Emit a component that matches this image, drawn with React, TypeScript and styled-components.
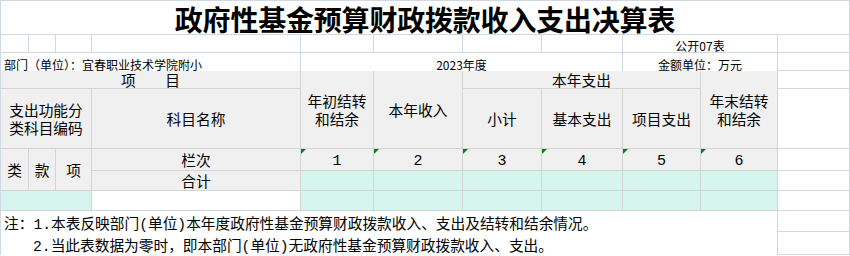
import React from 'react'
import styled, { createGlobalStyle, css } from 'styled-components'

const GRID_LINE = '#d0d7e5'
const TABLE_LINE = '#d4d4d4'
const GRAY = '#f0f0f0'
const MINT = '#d6f5ee'

const CJK = `"Noto Sans CJK SC", "Noto Sans", sans-serif`
const MONO = `"Liberation Mono", "Noto Sans CJK SC", monospace`

const GlobalStyle = createGlobalStyle`
  * { box-sizing: border-box; }
  body {
    margin: 0;
    background: #fff;
    font-family: ${CJK};
  }
`

type Fill = 'white' | 'gray' | 'mint'
type Edge = 'grid' | 'table' | 'open'

type CellProps = {
  $c: number
  $r: number
  $cs?: number
  $rs?: number
  $fill?: Fill
  $edge?: Edge
}

const fills: Record<Fill, string> = { white: '#fff', gray: GRAY, mint: MINT }

const edges: Record<Edge, ReturnType<typeof css>> = {
  grid: css`
    border-right: 1px solid ${GRID_LINE};
    border-bottom: 1px solid ${GRID_LINE};
  `,
  table: css`
    border-right: 1px solid ${TABLE_LINE};
    border-bottom: 1px solid ${TABLE_LINE};
  `,
  open: css`
    border-right: 1px solid ${GRID_LINE};
  `,
}

const Sheet = styled.div`
  display: grid;
  grid-template-columns: 28px 27px 36px 209px 73px 89px 79px 81px 78px 77px 72px;
  grid-template-rows: 34px 18px 18px 18px 60px 22px 20px 20px 21px 23px;
  width: 850px;
  border-top: 1px solid ${GRID_LINE};
  border-left: 1px solid ${GRID_LINE};
  color: #000;
`

const Cell = styled.div<CellProps>`
  grid-column: ${(p) => p.$c + 1} / span ${(p) => p.$cs ?? 1};
  grid-row: ${(p) => p.$r + 1} / span ${(p) => p.$rs ?? 1};
  background: ${(p) => fills[p.$fill ?? 'white']};
  ${(p) => edges[p.$edge ?? 'grid']}
  display: flex;
  align-items: center;
  justify-content: center;
  min-width: 0;
  white-space: nowrap;
`

const Title = styled(Cell)`
  padding-top: 2px;
  font-size: 28px;
  font-weight: 700;
  line-height: 30px;
  letter-spacing: -0.2px;
`

const Info = styled(Cell)<{ $left?: boolean }>`
  align-items: flex-end;
  justify-content: ${(p) => (p.$left ? 'flex-start' : 'center')};
  padding-left: ${(p) => (p.$left ? '3px' : '0')};
  font-size: 12px;
  line-height: 13px;
`

const Head = styled(Cell).attrs({ $fill: 'gray', $edge: 'table' })`
  padding: 0 6px;
  font-size: 14.7px;
  line-height: 18px;
  text-align: center;
  white-space: normal;
`

const Index = styled(Cell).attrs({ $fill: 'gray', $edge: 'table' })`
  position: relative;
  padding-top: 3px;
  font-family: ${MONO};
  font-size: 15px;

  &::before {
    content: '';
    position: absolute;
    top: 0;
    left: 0;
    border-top: 5px solid #0a7d14;
    border-right: 5px solid transparent;
  }
`

const Note = styled(Cell).attrs({ $edge: 'open' })<{ $indent?: boolean }>`
  justify-content: flex-start;
  padding-left: ${(p) => (p.$indent ? '32px' : '3px')};
  padding-top: 2px;
  font-family: ${MONO};
  font-size: 14.7px;
`

const upperCols = [0, 1, 2, 3, 4, 5, 6, 7]
const figureCols = [4, 5, 6, 7, 8, 9]
const spareRows = [1, 2, 3, 4, 5, 6, 7, 8, 9]

export default function App() {
  return (
    <>
      <GlobalStyle />
      <Sheet>
        <Title $c={0} $r={0} $cs={11}>
          政府性基金预算财政拨款收入支出决算表
        </Title>

        {upperCols.map((c) => (
          <Cell key={`u${c}`} $c={c} $r={1} />
        ))}
        <Info $c={8} $r={1} $cs={2}>
          公开07表
        </Info>

        <Info $c={0} $r={2} $cs={4} $edge="open" $left>
          部门（单位）：宜春职业技术学院附小
        </Info>
        <Info $c={4} $r={2} $cs={4} $edge="open">
          2023年度
        </Info>
        <Info $c={8} $r={2} $cs={2} $edge="open">
          金额单位：万元
        </Info>

        <Head $c={0} $r={3} $cs={4}>
          项　　目
        </Head>
        <Head $c={4} $r={3} $rs={2}>
          年初结转和结余
        </Head>
        <Head $c={5} $r={3} $rs={2}>
          本年收入
        </Head>
        <Head $c={6} $r={3} $cs={3}>
          本年支出
        </Head>
        <Head $c={9} $r={3} $rs={2}>
          年末结转和结余
        </Head>

        <Head $c={0} $r={4} $cs={3}>
          支出功能分类科目编码
        </Head>
        <Head $c={3} $r={4}>
          科目名称
        </Head>
        <Head $c={6} $r={4}>
          小计
        </Head>
        <Head $c={7} $r={4}>
          基本支出
        </Head>
        <Head $c={8} $r={4}>
          项目支出
        </Head>

        <Head $c={0} $r={5} $rs={2}>
          类
        </Head>
        <Head $c={1} $r={5} $rs={2}>
          款
        </Head>
        <Head $c={2} $r={5} $rs={2}>
          项
        </Head>
        <Head $c={3} $r={5}>
          栏次
        </Head>
        {figureCols.map((c, i) => (
          <Index key={`n${c}`} $c={c} $r={5}>
            {i + 1}
          </Index>
        ))}

        <Head $c={3} $r={6}>
          合计
        </Head>
        {figureCols.map((c) => (
          <Cell key={`t${c}`} $c={c} $r={6} $fill="mint" $edge="table" />
        ))}

        <Cell $c={0} $r={7} $cs={3} $fill="mint" $edge="table" />
        <Cell $c={3} $r={7} $edge="table" />
        {figureCols.map((c) => (
          <Cell key={`d${c}`} $c={c} $r={7} $fill="mint" $edge="table" />
        ))}

        <Note $c={0} $r={8} $cs={10}>
          注：1.本表反映部门(单位)本年度政府性基金预算财政拨款收入、支出及结转和结余情况。
        </Note>
        <Note $c={0} $r={9} $cs={10} $indent>
          2.当此表数据为零时，即本部门(单位)无政府性基金预算财政拨款收入、支出。
        </Note>

        {spareRows.map((r) => (
          <Cell key={`s${r}`} $c={10} $r={r} />
        ))}
      </Sheet>
    </>
  )
}
